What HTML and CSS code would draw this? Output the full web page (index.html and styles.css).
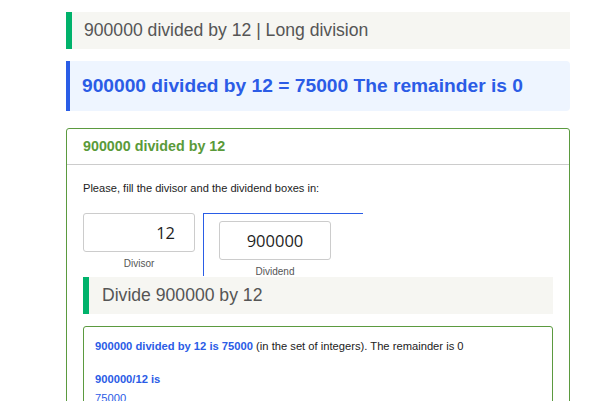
FILE: index.html
```html
<!DOCTYPE html>
<html>
<head>
<meta charset="utf-8">
<link rel="stylesheet" href="styles.css">
</head>
<body>
<div class="page">
  <h1 class="title">900000 divided by 12 | Long division</h1>
  <div class="result">900000 divided by 12 = 75000 The remainder is 0</div>
  <div class="card">
    <div class="card-head">900000 divided by 12</div>
    <div class="card-body">
      <p class="intro">Please, fill the divisor and the dividend boxes in:</p>
      <div class="calc">
        <div class="field divisor">
          <div class="box">12</div>
          <div class="label">Divisor</div>
        </div>
        <div class="bracket">
          <div class="field dividend">
            <div class="box">900000</div>
            <div class="label">Dividend</div>
          </div>
        </div>
      </div>
      <h2 class="sub">Divide 900000 by 12</h2>
      <div class="answer">
        <p class="line1"><b>900000 divided by 12 is 75000</b> (in the set of integers). The remainder is 0</p>
        <p class="line2"><b>900000/12 is</b></p>
        <p class="line3">75000</p>
      </div>
    </div>
  </div>
</div>
</body>
</html>
```
FILE: styles.css
```css
html, body { margin: 0; padding: 0; background: #fff; }
body { font-family: "Liberation Sans", Arial, sans-serif; }
.page { margin-left: 66px; width: 504px; padding-top: 12px; }
.title {
  margin: 0;
  height: 37px;
  box-sizing: border-box;
  border-left: 6px solid #00b26b;
  background: #f6f6f2;
  font-weight: normal;
  font-size: 17.6px;
  line-height: 37px;
  color: #555;
  padding-left: 12px;
}
.result {
  margin-top: 12px;
  height: 50px;
  box-sizing: border-box;
  border-left: 4px solid #2a5de6;
  background: #eef5ff;
  border-radius: 0 4px 4px 0;
  color: #2b5ce6;
  font-weight: bold;
  font-size: 19.2px;
  line-height: 50px;
  padding-left: 12px;
}
.card {
  margin-top: 17px;
  border: 1px solid #5b9a3f;
  border-radius: 3px;
  height: 300px;
}
.card-head {
  height: 35px;
  border-bottom: 1px solid #ccc;
  color: #5a9a3a;
  font-weight: bold;
  font-size: 14.3px;
  line-height: 35px;
  padding-left: 16px;
}
.card-body { padding: 0 16px; }
.intro { margin: 17px 0 0; font-size: 11.1px; line-height: 13px; color: #222; }
.calc { display: flex; margin-top: 18px; align-items: flex-start; }
.field { display: flex; flex-direction: column; align-items: center; width: fit-content; }
.box {
  box-sizing: border-box;
  width: 112px;
  height: 39px;
  border: 1px solid #ccc;
  border-radius: 3px;
  font-family: "Open Sans", "Noto Sans", sans-serif;
  font-size: 16.5px;
  color: #1e1e1e;
  line-height: 37px;
}
.divisor .box { text-align: right; padding-right: 19px; }
.dividend .box { text-align: center; }
.label { font-size: 10px; color: #555; margin-top: 6px; line-height: 12px; }
.bracket {
  margin-left: 8px;
  width: 160px;
  height: 63px;
  border-top: 1px solid #2a5de6;
  border-left: 1px solid #2a5de6;
  padding: 7px 0 0 15px;
  box-sizing: border-box;
}
.sub {
  margin: 1px 0 0;
  height: 37px;
  width: 470px;
  box-sizing: border-box;
  border-left: 6px solid #00b26b;
  background: #f6f6f2;
  font-weight: normal;
  font-size: 17.6px;
  line-height: 37px;
  color: #555;
  padding-left: 13px;
}
.answer {
  margin-top: 12px;
  width: 470px;
  box-sizing: border-box;
  border: 1px solid #5b9a3f;
  border-radius: 3px;
  padding: 13px 11px 0;
  height: 100px;
}
.answer p { margin: 0; font-size: 11.2px; color: #222; line-height: 13px; }
.answer b { color: #2b5ce6; }
.line2 { margin-top: 20px !important; }
.line3 { margin-top: 6px !important; color: #2b5ce6 !important; }
```
